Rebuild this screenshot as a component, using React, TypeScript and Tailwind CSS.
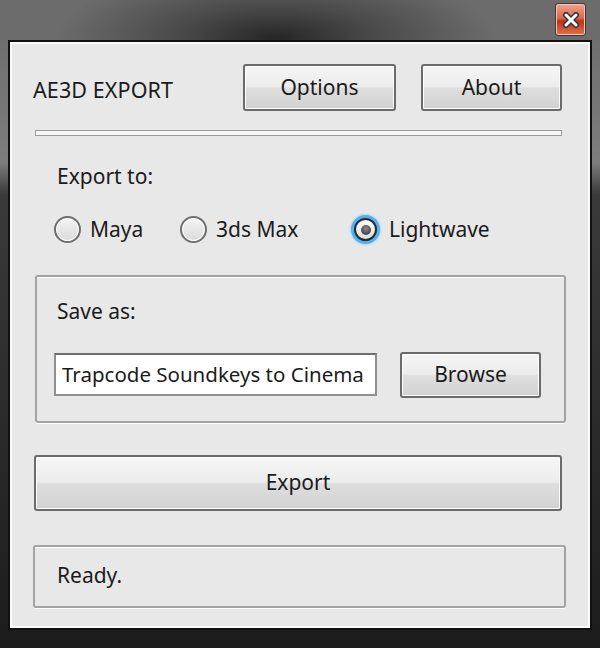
import { useState } from "react";

const btn =
  "flex items-center justify-center rounded-[3px] border-2 border-[#6b6b6b] bg-[linear-gradient(#f6f6f6_0%,#ececec_48%,#dedede_52%,#d2d2d2_100%)] shadow-[inset_0_0_0_1px_#fbfbfb] text-[21px] text-[#1b1b1b]";

const targets = [
  { label: "Maya", width: "w-[126px]" },
  { label: "3ds Max", width: "w-[171px]" },
  { label: "Lightwave", width: "w-[140px]" },
];

const Radio = ({ checked }: { checked: boolean }) =>
  checked ? (
    <span className="flex h-[29px] w-[29px] items-center justify-center rounded-full bg-[#4fb2f5] shadow-[0_0_3px_#7cc8ff]">
      <span className="flex h-[23px] w-[23px] items-center justify-center rounded-full border-2 border-[#2a2a2a] bg-[linear-gradient(#ffffff,#dcdcdc)]">
        <span className="h-[10px] w-[10px] rounded-full bg-[radial-gradient(circle_at_50%_35%,#8a8a8a,#2a2a2a)]" />
      </span>
    </span>
  ) : (
    <span className="h-[27px] w-[27px] rounded-full border-2 border-[#6e6e6e] bg-[linear-gradient(#f4f4f4,#dadada)] shadow-[inset_0_0_0_1px_#ffffff]" />
  );

export default function App() {
  const [target, setTarget] = useState("Lightwave");

  return (
    <div className="flex h-[648px] w-[600px] flex-col overflow-hidden bg-[linear-gradient(#6a6a6a_0%,#7d7d7d_25%,#3a3a3a_30%,#1c1c1c_100%)] font-['Noto_Sans',sans-serif] text-[#1b1b1b]">
      {/* title bar */}
      <div className="flex h-[40px] shrink-0 items-start justify-end bg-[radial-gradient(ellipse_220px_70px_at_46%_95%,#262626_0%,#4a4a4a_45%,#6c6c6c_100%)] pr-[14px] pt-[3px]">
        <button className="flex h-[33px] w-[31px] items-center justify-center rounded-[3px] border border-[#3a3a3a] bg-[linear-gradient(#f0a48f_0%,#d9694c_45%,#b8341a_55%,#e0724f_100%)] shadow-[inset_0_0_0_1px_#f5c3b5]">
          <svg width="18" height="16" viewBox="0 0 18 16">
            <path d="M4 3 L14 13 M14 3 L4 13" stroke="#2d3440" strokeWidth="6" strokeLinecap="round" />
            <path d="M4 3 L14 13 M14 3 L4 13" stroke="#ffffff" strokeWidth="3" strokeLinecap="round" />
          </svg>
        </button>
      </div>

      {/* dialog body */}
      <div className="flex-1 px-[8px] pb-[18px]">
        <div className="flex h-full flex-col border-2 border-[#111] bg-[#e8e8e8] pl-[23px] pr-[24px] pt-[22px] shadow-[inset_0_0_0_2px_#fafafa]">
          <div className="flex items-center pr-[4px]">
            <span className="mt-[6px] flex-1 text-[21.5px] tracking-[0.1px]">AE3D EXPORT</span>
            <button className={`${btn} h-[47px] w-[153px]`}>Options</button>
            <button className={`${btn} ml-[25px] h-[47px] w-[141px]`}>About</button>
          </div>

          <div className="ml-[2px] mr-[4px] mt-[19px] h-[6px] border border-[#9c9c9c] bg-[#f6f6f6]" />

          <div className="ml-[24px] mt-[28px] text-[21px] leading-[24px]">Export to:</div>

          <div className="ml-[21px] mt-[26px] flex items-center">
            {targets.map((t) => (
              <label
                key={t.label}
                onClick={() => setTarget(t.label)}
                className={`flex ${t.width} cursor-pointer items-center gap-[9px] text-[21px]`}
              >
                <Radio checked={target === t.label} />
                <span>{t.label}</span>
              </label>
            ))}
          </div>

          <div className="ml-[2px] mt-[29px] flex h-[148px] flex-col rounded-[3px] border-2 border-[#a3a3a3] pl-[17px] pt-[22px] shadow-[0_1px_0_#ffffff,inset_0_1px_0_#ffffff]">
            <div className="ml-[3px] text-[21px] leading-[24px]">Save as:</div>
            <div className="mt-[29px] flex items-center">
              <div className="flex h-[43px] w-[323px] items-center overflow-hidden whitespace-nowrap border-2 border-[#8f8f8f] border-t-[#6f6f6f] bg-white pl-[6px] text-[20.5px]">
                Trapcode Soundkeys to Cinema
              </div>
              <button className={`${btn} ml-[23px] h-[46px] w-[141px]`}>Browse</button>
            </div>
          </div>

          <button className={`${btn} ml-[1px] mr-[4px] mt-[32px] h-[56px]`}>Export</button>

          <div className="mt-[34px] flex h-[63px] items-center rounded-[3px] border-2 border-[#a3a3a3] pl-[22px] text-[21px] shadow-[0_1px_0_#ffffff,inset_0_1px_0_#ffffff]">
            Ready.
          </div>
        </div>
      </div>
    </div>
  );
}
